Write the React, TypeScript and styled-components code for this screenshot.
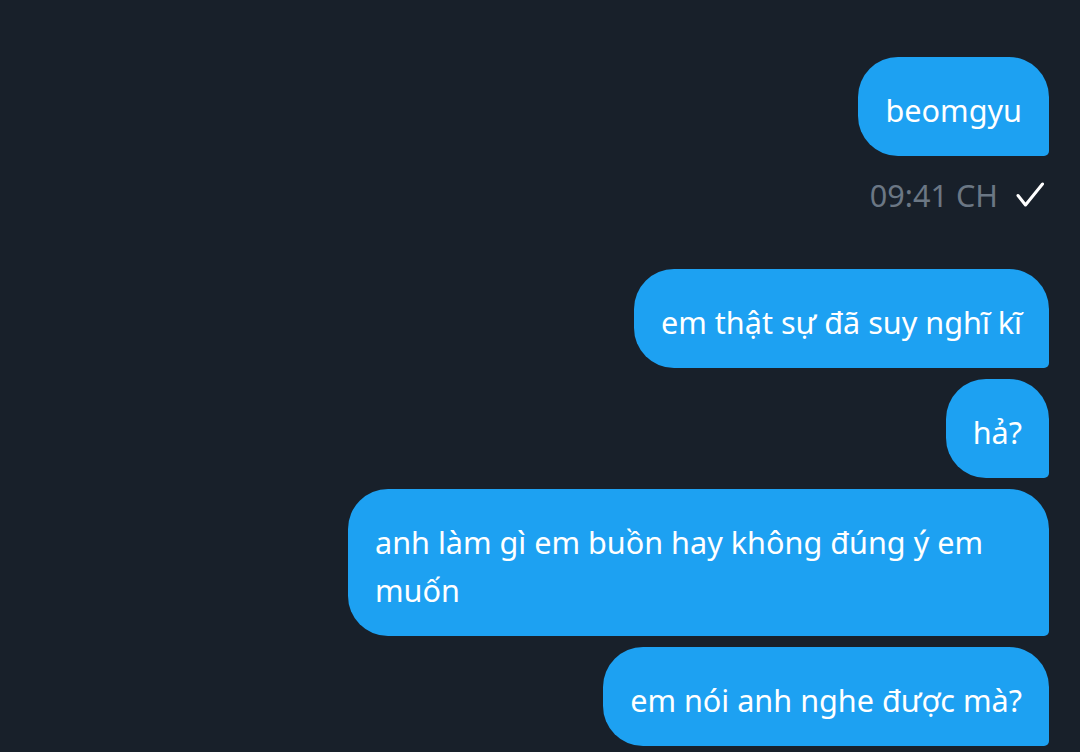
import React from "react";
import styled, { createGlobalStyle } from "styled-components";

const Global = createGlobalStyle`
  html, body {
    margin: 0;
    padding: 0;
    background: #18202a;
  }
  body {
    font-family: "Noto Sans", "Open Sans", sans-serif;
    -webkit-font-smoothing: antialiased;
  }
`;

const Screen = styled.div`
  width: 1080px;
  height: 752px;
  overflow: hidden;
  background: #18202a;
  box-sizing: border-box;
  padding: 57px 31px 0 0;
  display: flex;
  flex-direction: column;
  align-items: flex-end;
`;

const Bubble = styled.div<{ $gapTop?: number }>`
  box-sizing: border-box;
  max-width: 701px;
  margin-top: ${(p) => p.$gapTop ?? 11}px;
  padding: 29px 27px 22px 27px;
  background: #1da1f2;
  color: #ffffff;
  font-size: 30.6px;
  line-height: 48px;
  border-radius: 40px 40px 5px 40px;
  white-space: normal;
`;

const Meta = styled.div`
  margin-top: 22px;
  margin-right: 5px;
  display: flex;
  align-items: center;
  gap: 18px;
  height: 34px;
`;

const Time = styled.span`
  font-size: 30.6px;
  line-height: 34px;
  color: #6b7784;
`;

const Check = () => (
  <svg width="28" height="26" viewBox="0 0 28 26" fill="none">
    <polyline
      points="2,13.5 9.5,23 26.5,2"
      stroke="#ffffff"
      strokeWidth="3"
      strokeLinecap="round"
      strokeLinejoin="round"
    />
  </svg>
);

const messages = [
  "em thật sự đã suy nghĩ kĩ",
  "hả?",
  "anh làm gì em buồn hay không đúng ý em muốn",
  "em nói anh nghe được mà?",
];

export default function App() {
  return (
    <>
      <Global />
      <Screen>
        <Bubble $gapTop={0}>beomgyu</Bubble>
        <Meta>
          <Time>09:41 CH</Time>
          <Check />
        </Meta>
        {messages.map((m, i) => (
          <Bubble key={i} $gapTop={i === 0 ? 57 : 11}>
            {m}
          </Bubble>
        ))}
      </Screen>
    </>
  );
}
